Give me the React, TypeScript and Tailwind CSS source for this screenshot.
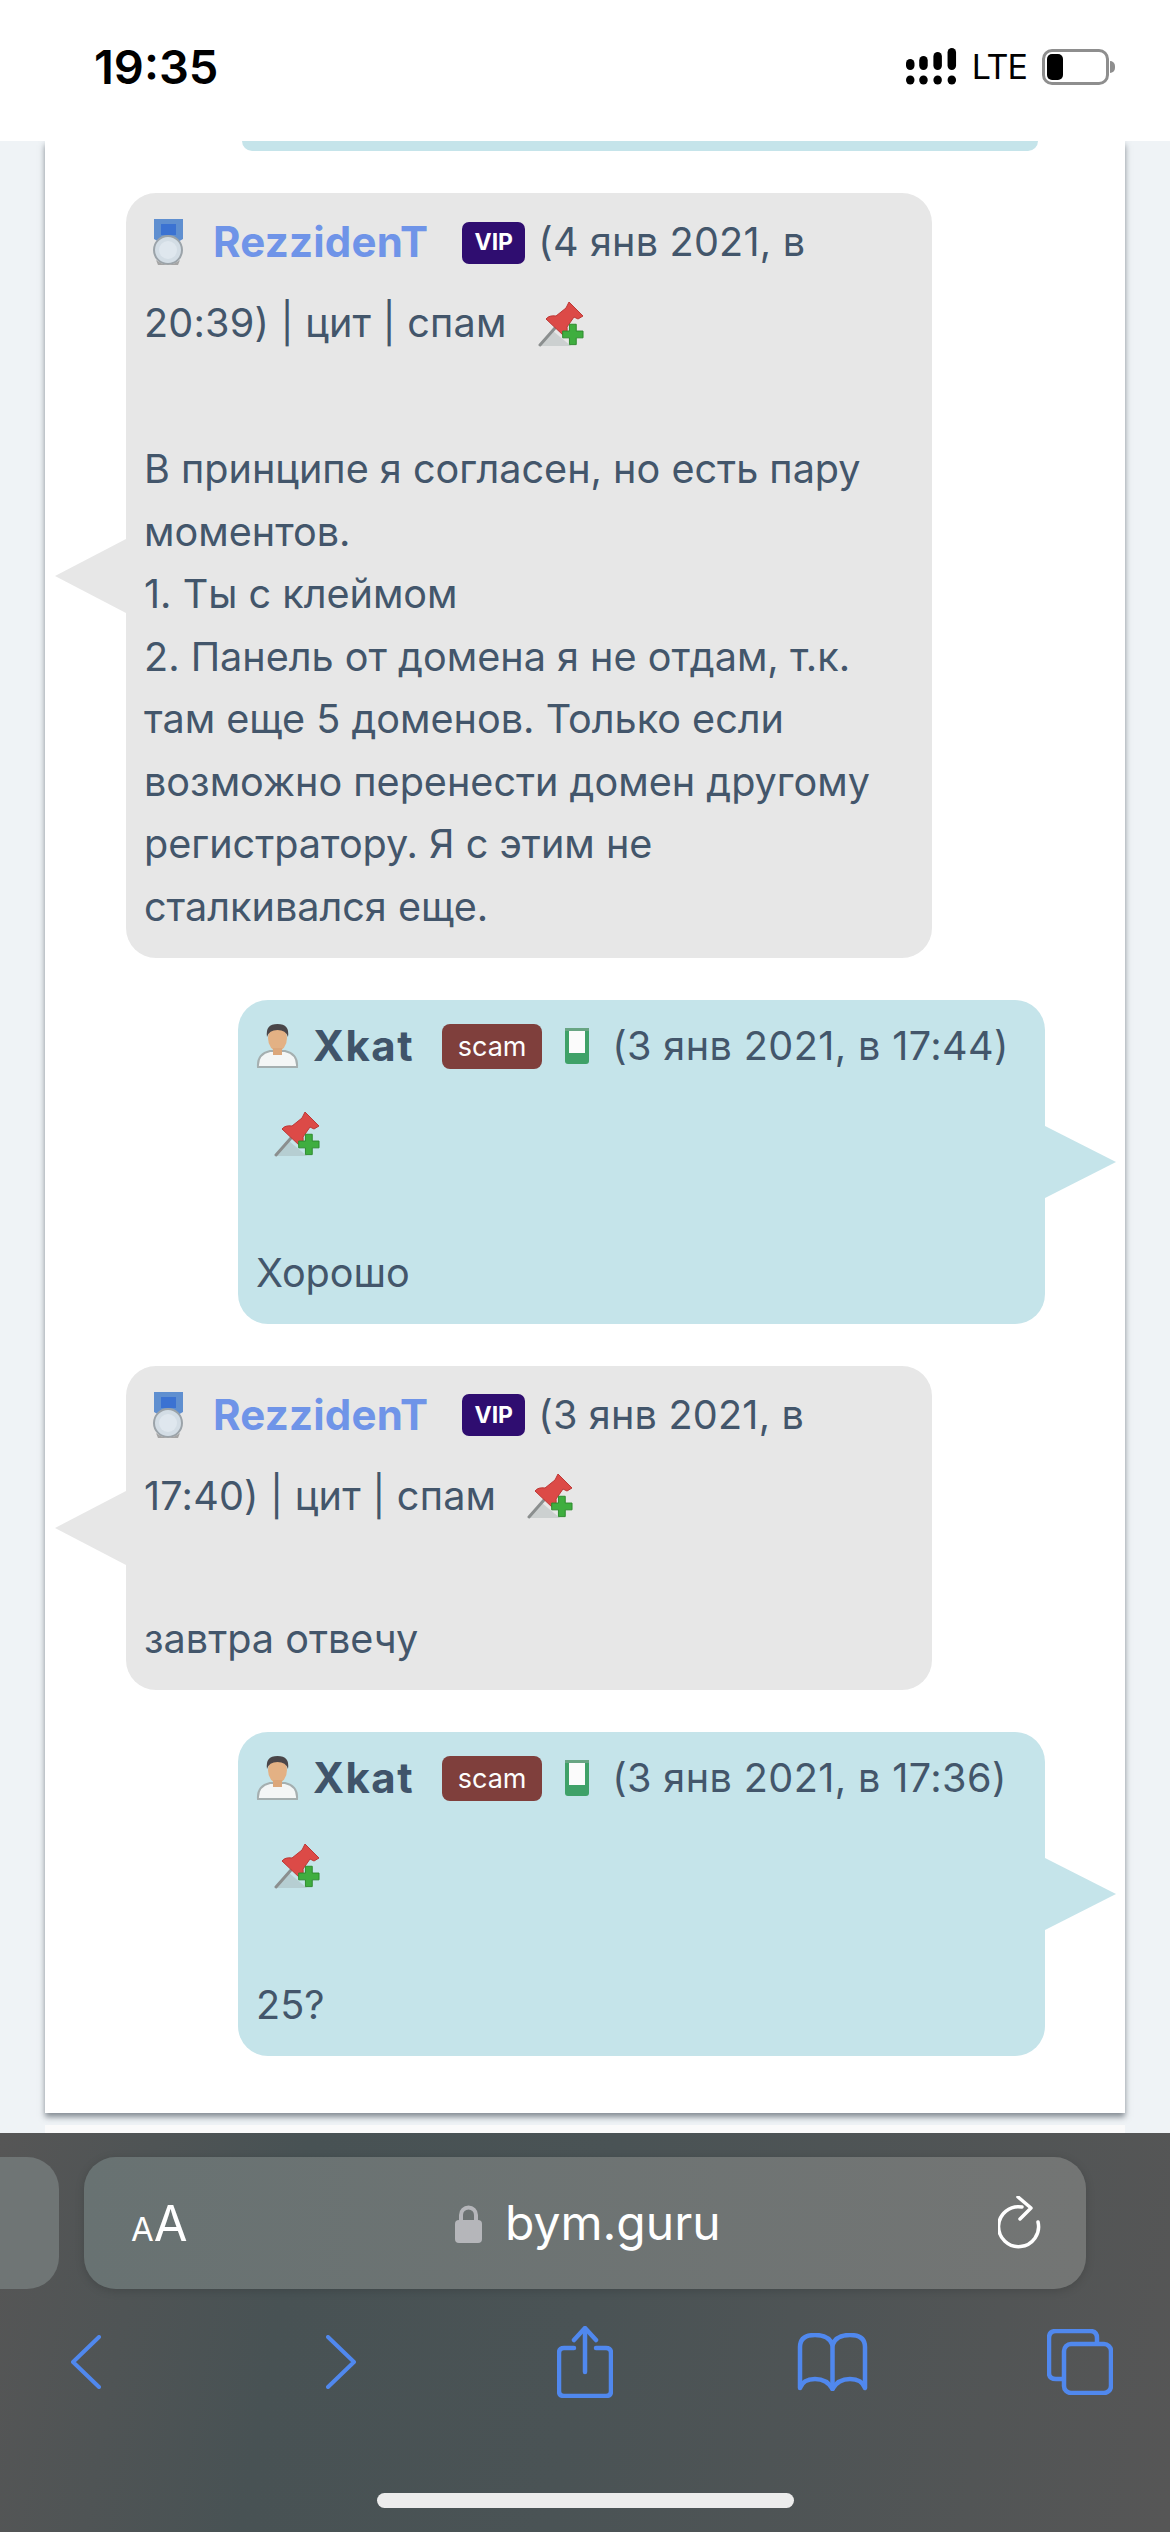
import React from "react";

const Pin = () => (
  <svg width="49" height="46" viewBox="0 0 49 46" className="shrink-0">
    <path d="M3 45 L16 30 L34 45 Z" fill="#9aa5a5" opacity="0.35" />
    <path d="M3 44 L18 27" stroke="#8b8f8f" strokeWidth="3" strokeLinecap="round" />
    <path d="M32 1 L46 15 L41 18 L37 16 L30 26 Q31 32 27 35 L9 18 Q12 14 19 15 L29 7 Z" fill="#dc4a47" stroke="#bd3836" strokeWidth="1" />
    <path d="M35 25 h7 v7 h7 v7 h-7 v7 h-7 v-7 h-7 v-7 h7 Z" fill="#3fae3f" stroke="#2d8a2d" strokeWidth="1" transform="translate(-1.5,-1) scale(0.97)" />
  </svg>
);

const Medal = () => (
  <svg width="30" height="47" viewBox="0 0 30 47" className="shrink-0">
    <path d="M1 0 H30 V20 L23 24 H8 L1 20 Z" fill="#5f8fd0" />
    <rect x="8" y="5" width="15" height="11" fill="#3b72d2" />
    <circle cx="15" cy="31" r="14" fill="#d3dde5" stroke="#9ba3a9" strokeWidth="2" />
    <circle cx="15" cy="31" r="9" fill="#dfe7ee" />
    <path d="M3 41 Q15 50 27 41 L25 46 H5 Z" fill="#a5a5a5" />
  </svg>
);

const Man = () => (
  <svg width="43" height="45" viewBox="0 0 43 45" className="shrink-0">
    <path d="M2 43 Q1 30 14 27 L29 27 Q42 30 41 43 Z" fill="#f4f6f6" stroke="#a5afb0" strokeWidth="2" />
    <ellipse cx="21.5" cy="14" rx="9.5" ry="13" fill="#e3b184" />
    <path d="M11 13 Q9 0 21.5 0 Q34 0 32 13 Q30 6 21.5 6 Q13 6 11 13 Z" fill="#4a4649" />
    <rect x="17" y="24" width="9" height="7" fill="#dca77b" />
  </svg>
);

const Phone = () => (
  <svg width="24" height="36" viewBox="0 0 24 36" className="shrink-0">
    <rect width="24" height="36" rx="3" fill="#3fa168" />
    <rect x="4" y="3" width="16" height="22" fill="#fbfbfb" />
    <rect x="0" y="0" width="24" height="3" fill="#68a583" />
  </svg>
);

const Vip = () => (
  <span className="ml-[34px] flex h-[42px] w-[63px] shrink-0 items-center justify-center rounded-[7px] bg-[#2f0d70] text-[23px] font-bold leading-none text-white">VIP</span>
);

const Scam = () => (
  <span className="ml-[28px] flex h-[45px] w-[100px] shrink-0 items-center justify-center rounded-[8px] bg-[#7f3f3c] text-[27px] leading-none text-[#fdfdfd]">scam</span>
);

const Grey = ({ date1, line2, children }: { date1: string; line2: string; children: React.ReactNode }) => (
  <div className="relative ml-[81px] w-[806px] rounded-[30px] bg-[#e7e7e7] pt-[9px] pb-[20px] pl-[18px]">
    <div className="absolute left-[-71px] top-1/2 h-0 w-0 -translate-y-1/2 border-y-[37px] border-r-[71px] border-y-transparent border-r-[#e7e7e7]" />
    <div className="flex h-[81px] items-center pl-[9px]">
      <Medal />
      <span className="ml-[30px] text-[42px] font-bold tracking-[0.2px] text-[#6f94e8]">RezzidenT</span>
      <Vip />
      <span className="ml-[13px] whitespace-nowrap tracking-[0.2px]">{date1}</span>
    </div>
    <div className="flex h-[81px] items-center">
      <span className="whitespace-nowrap tracking-[0.2px]">{line2}</span>
      <span className="ml-[30px]"><Pin /></span>
    </div>
    {children}
  </div>
);

const Blue = ({ date, children }: { date: string; children: React.ReactNode }) => (
  <div className="relative ml-[193px] w-[807px] rounded-[30px] bg-[#c5e4ea] pt-[7px] pb-[19px] pl-[18px]">
    <div className="absolute right-[-71px] top-1/2 h-0 w-0 -translate-y-1/2 border-y-[36px] border-l-[71px] border-y-transparent border-l-[#c5e4ea]" />
    <div className="flex h-[80px] items-center pb-[2px]">
      <Man />
      <span className="ml-[14px] text-[42px] font-bold tracking-[1.5px] text-[#40546a]">Xkat</span>
      <Scam />
      <span className="ml-[23px]"><Phone /></span>
      <span className="ml-[23px] whitespace-nowrap tracking-[0.4px]">{date}</span>
    </div>
    <div className="mt-[6px] flex h-[81px] items-center pl-[17px]"><Pin /></div>
    <div className="mt-[68px]">{children}</div>
  </div>
);

export default function App() {
  return (
    <div className="flex h-[2532px] w-[1170px] flex-col overflow-hidden bg-[#eff3f6] font-['Inter','Noto_Sans',sans-serif] text-[39.6px] leading-[62.5px] text-[#43566b]">
      <div className="flex h-[141px] shrink-0 items-center justify-between bg-white pb-[8px] pl-[94px] pr-[55px] text-black">
        <span className="text-[47px] font-semibold leading-none">19:35</span>
        <div className="flex items-center">
          <svg width="51" height="37" viewBox="0 0 54 37" fill="#000" preserveAspectRatio="none">
            <rect x="0" y="11" width="9" height="11" rx="4.5" />
            <rect x="14" y="8" width="9" height="14" rx="4.5" />
            <rect x="29" y="4" width="9" height="18" rx="4.5" />
            <rect x="44" y="0" width="9" height="22" rx="4.5" />
            <circle cx="4.5" cy="32" r="4.5" /><circle cx="18.5" cy="32" r="4.5" /><circle cx="33.5" cy="32" r="4.5" /><circle cx="48.5" cy="32" r="4.5" />
          </svg>
          <span className="ml-[15px] text-[34px] font-normal leading-none tracking-[-1px]">LTE</span>
          <div className="ml-[15px] flex h-[36px] w-[67px] items-center rounded-[10px] border-[3px] border-[#8e8e8e] p-[2px]">
            <div className="h-full w-[16px] rounded-[5px] bg-black" />
          </div>
          <div className="ml-[1px] h-[12px] w-[5px] rounded-r-full bg-[#8e8e8e]" />
        </div>
      </div>

      <div className="min-h-0 flex-1 overflow-hidden px-[45px]">
        <div className="h-[1972px] bg-white shadow-[0_4px_6px_rgba(60,70,80,0.6)]">
          <div className="ml-[197px] h-[10px] w-[796px] rounded-b-[24px] bg-[#c5e4ea]" />
          <div className="flex flex-col gap-[42px] pt-[42px]">
            <Grey date1="(4 янв 2021, в" line2="20:39) | цит | спам">
              <p className="mt-[74px]">В принципе я согласен, но есть пару<br />моментов.<br />1. Ты с клеймом<br />2. Панель от домена я не отдам, т.к.<br />там еще 5 доменов. Только если<br />возможно перенести домен другому<br />регистратору. Я с этим не<br />сталкивался еще.</p>
            </Grey>
            <Blue date="(3 янв 2021, в 17:44)"><p>Хорошо</p></Blue>
            <Grey date1="(3 янв 2021, в" line2="17:40) | цит | спам"><p className="mt-[71px]">завтра отвечу</p></Grey>
            <Blue date="(3 янв 2021, в 17:36)"><p>25?</p></Blue>
          </div>
        </div>
        <div className="mt-[12px] h-[20px] bg-[#fafafa]" />
      </div>

      <div className="flex h-[399px] shrink-0 flex-col bg-[linear-gradient(100deg,#565656_0%,#485254_25%,#4a5355_50%,#565656_100%)]">
        <div className="mt-[24px] flex h-[132px] shrink-0 gap-[25px]">
          <div className="ml-[-60px] w-[119px] rounded-[32px] bg-[#6f7575]" />
          <div className="flex w-[1002px] items-center justify-between rounded-[32px] bg-[linear-gradient(90deg,#687272,#737574)] pl-[47px] pr-[44px] shadow-[0_2px_10px_rgba(0,0,0,0.15)]">
            <span className="flex items-baseline text-white">
              <span className="text-[33px] leading-none">A</span>
              <span className="text-[49px] leading-none">A</span>
            </span>
            <div className="ml-[-10px] flex items-center">
              <svg width="27" height="38" viewBox="0 0 27 38" className="mt-[2px]">
                <path d="M6 17 V10 A7.5 7.5 0 0 1 21 10 V17" fill="none" stroke="#b5b6ba" strokeWidth="4" />
                <rect x="0" y="15" width="27" height="23" rx="4" fill="#b5b6ba" />
              </svg>
              <span className="ml-[23px] text-[48px] leading-none text-white">bym.guru</span>
            </div>
            <svg width="44" height="54" viewBox="0 0 44 54" fill="none" stroke="#fff" strokeWidth="3.5" strokeLinecap="round" strokeLinejoin="round">
              <path d="M24 11 A20 20 0 1 0 40 26" />
              <path d="M20 1 L33 12 L22 23" />
            </svg>
          </div>
        </div>
        <div className="mt-[37px] h-[72px] shrink-0">
          <div className="flex h-full items-center pl-[71px]">
            <svg width="30" height="54" viewBox="0 0 30 54" fill="none" stroke="#5088ee" strokeWidth="4" strokeLinecap="round" strokeLinejoin="round"><path d="M28 2 L2 27 L28 52" /></svg>
            <svg width="30" height="54" viewBox="0 0 30 54" fill="none" stroke="#5088ee" strokeWidth="4" strokeLinecap="round" strokeLinejoin="round" className="ml-[225px]"><path d="M2 2 L28 27 L2 52" /></svg>
            <svg width="56" height="72" viewBox="0 0 56 72" fill="none" stroke="#5088ee" strokeWidth="4.5" strokeLinecap="round" strokeLinejoin="round" className="ml-[201px]"><path d="M17 22 H7 Q2 22 2 27 V65 Q2 70 7 70 H49 Q54 70 54 65 V27 Q54 22 49 22 H39" /><path d="M28 46 V3" /><path d="M17 14 L28 2 L39 14" /></svg>
            <svg width="71" height="58" viewBox="0 0 71 58" fill="none" stroke="#5088ee" strokeWidth="4.5" strokeLinecap="round" strokeLinejoin="round" className="ml-[184px]"><path d="M35.5 12 Q32 2 18 2 Q3 2 3 14 V55 Q6 46 18 46 Q30 46 35.5 56 Q41 46 53 46 Q65 46 68 55 V14 Q68 2 53 2 Q39 2 35.5 12 Z" /><path d="M35.5 12 V56" /></svg>
            <svg width="66" height="66" viewBox="0 0 66 66" fill="none" stroke="#5088ee" strokeWidth="4.5" strokeLinejoin="round" className="ml-[179px]"><path d="M50 15 V9 Q50 2 43 2 H9 Q2 2 2 9 V44 Q2 50 9 50 H17" /><rect x="17" y="15" width="47" height="49" rx="7" /></svg>
          </div>
        </div>
        <div className="mx-auto mt-[95px] h-[15px] w-[417px] rounded-full bg-[#ececec]" />
      </div>
    </div>
  );
}
